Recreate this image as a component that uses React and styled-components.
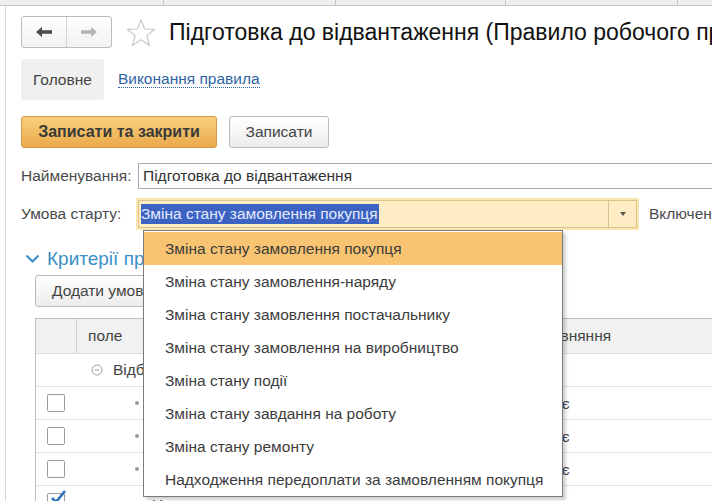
import React from 'react'
import styled, { createGlobalStyle } from 'styled-components'

const GlobalStyle = createGlobalStyle`
  html, body {
    margin: 0;
    padding: 0;
    background: #fff;
    overflow: hidden;
  }
  body {
    font-family: Arial, "Liberation Sans", sans-serif;
    color: #404040;
  }
`

const FS = '15.5px'

const options = [
  'Зміна стану замовлення покупця',
  'Зміна стану замовлення-наряду',
  'Зміна стану замовлення постачальнику',
  'Зміна стану замовлення на виробництво',
  'Зміна стану події',
  'Зміна стану завдання на роботу',
  'Зміна стану ремонту',
  'Надходження передоплати за замовленням покупця',
]

const rows = [
  { name: 'Статус', compare: 'Дорівнює' },
  { name: 'Організація', compare: 'Дорівнює' },
  { name: 'Склад', compare: 'Дорівнює' },
  { name: 'Номер', compare: '', checked: true, deep: true },
]

const BackArrow = ({ color }) => (
  <svg width="18" height="12" viewBox="0 0 18 12">
    <path d="M1 6 L7 1 L7 4.2 L17 4.2 L17 7.8 L7 7.8 L7 11 Z" fill={color} />
  </svg>
)

const ForwardArrow = ({ color }) => (
  <svg width="18" height="12" viewBox="0 0 18 12">
    <path d="M17 6 L11 1 L11 4.2 L1 4.2 L1 7.8 L11 7.8 L11 11 Z" fill={color} />
  </svg>
)

const Star = () => (
  <svg width="30" height="29" viewBox="0 0 30 29">
    <path
      d="M15 1.5 L18.6 11 L28.6 11.3 L20.8 17.6 L23.6 27.4 L15 21.7 L6.4 27.4 L9.2 17.6 L1.4 11.3 L11.4 11 Z"
      fill="none"
      stroke="#c9c9c9"
      strokeWidth="1.2"
      strokeLinejoin="round"
    />
  </svg>
)

const Chevron = () => (
  <svg width="15" height="10" viewBox="0 0 15 10">
    <path d="M1.5 1.5 L7.5 7.5 L13.5 1.5" fill="none" stroke="#3a8fc6" strokeWidth="2" />
  </svg>
)

const CollapseIcon = () => (
  <svg width="12" height="12" viewBox="0 0 12 12">
    <circle cx="6" cy="6" r="5" fill="none" stroke="#a0a0a0" strokeWidth="1" />
    <path d="M3.5 6 H8.5" stroke="#a0a0a0" strokeWidth="1" />
  </svg>
)

const Tick = () => (
  <svg width="20" height="18" viewBox="0 0 20 18">
    <path d="M4 9 L8 13 L17 2" fill="none" stroke="#2f6fbf" strokeWidth="2.6" />
  </svg>
)

const App = () => (
  <>
    <GlobalStyle />
    <Window>
      <TopStrip>
        <StripTab $w={164} />
        <StripTab $w={172} />
        <StripTab $w={170} />
        <StripTab $w={172} />
      </TopStrip>

      <Body>
        <Gutter />
        <Content>
          <HeaderRow>
            <NavGroup>
              <NavButton><BackArrow color="#4a4a4a" /></NavButton>
              <NavButton $divider><ForwardArrow color="#b4b4b4" /></NavButton>
            </NavGroup>
            <StarBox><Star /></StarBox>
            <Title>Підготовка до відвантаження (Правило робочого процесу)</Title>
          </HeaderRow>

          <TabsRow>
            <ActiveTab>Головне</ActiveTab>
            <LinkTab>Виконання правила</LinkTab>
          </TabsRow>

          <CommandBar>
            <PrimaryButton>Записати та закрити</PrimaryButton>
            <Button>Записати</Button>
          </CommandBar>

          <FieldRow $top={15}>
            <Label>Найменування:</Label>
            <TextInput>Підготовка до відвантаження</TextInput>
          </FieldRow>

          <FieldRow $top={11}>
            <Label>Умова старту:</Label>
            <ComboWrap>
              <Combo>
                <ComboText>
                  <Selected>Зміна стану замовлення покупця</Selected>
                </ComboText>
                <ComboButton><Caret /></ComboButton>
              </Combo>
              <DropList>
                {options.map((o, i) => (
                  <DropItem key={o} $active={i === 0}>{o}</DropItem>
                ))}
              </DropList>
            </ComboWrap>
            <SideLabel>Включено</SideLabel>
          </FieldRow>

          <SectionHeader>
            <Chevron />
            <SectionTitle>Критерії пропуску</SectionTitle>
          </SectionHeader>

          <SmallBar>
            <Button $wide>Додати умову</Button>
          </SmallBar>

          <Table>
            <HeadRow>
              <CheckCell $head />
              <FieldCell>поле</FieldCell>
              <CompareCell $head>Вид порівняння</CompareCell>
            </HeadRow>
            <Row>
              <CheckCell />
              <FieldCell $group>
                <CollapseIcon />
                <span>Відбір</span>
              </FieldCell>
              <CompareCell />
            </Row>
            {rows.map(r => (
              <Row key={r.name}>
                <CheckCell>
                  <CheckBox>{r.checked && <TickWrap><Tick /></TickWrap>}</CheckBox>
                </CheckCell>
                <FieldCell $item $deep={r.deep}>
                  {!r.deep && <Dot />}
                  <span>{r.name}</span>
                </FieldCell>
                <CompareCell>{r.compare}</CompareCell>
              </Row>
            ))}
          </Table>
        </Content>
      </Body>
    </Window>
  </>
)

export default App

const Window = styled.div`
  width: 712px;
  height: 501px;
  overflow: hidden;
  background: #fff;
`

const TopStrip = styled.div`
  display: flex;
  height: 5px;
  background: #efefef;
  border-bottom: 1px solid #c4c4c4;
`

const StripTab = styled.div`
  width: ${p => p.$w}px;
  flex-shrink: 0;
  border-right: 1px solid #c8c8c8;
  box-sizing: border-box;
`

const Body = styled.div`
  display: flex;
  height: 495px;
`

const Gutter = styled.div`
  width: 5px;
  flex-shrink: 0;
  border-right: 1px solid #d6d6d6;
`

const Content = styled.div`
  flex: 1;
  min-width: 0;
  padding-left: 15px;
  display: flex;
  flex-direction: column;
`

const HeaderRow = styled.div`
  display: flex;
  align-items: center;
  margin-top: 10px;
  height: 32px;
  white-space: nowrap;
`

const NavGroup = styled.div`
  display: flex;
  width: 91px;
  height: 32px;
  box-sizing: border-box;
  border: 1px solid #bcbcbc;
  border-radius: 3px;
  background: linear-gradient(#ffffff, #f1f1f1);
  flex-shrink: 0;
`

const NavButton = styled.div`
  flex: 1;
  display: flex;
  align-items: center;
  justify-content: center;
  border-left: ${p => (p.$divider ? '1px solid #d4d4d4' : 'none')};
`

const StarBox = styled.div`
  display: flex;
  margin-left: 14px;
  flex-shrink: 0;
`

const Title = styled.div`
  margin-left: 13px;
  font-size: 23px;
  color: #111;
  overflow: hidden;
`

const TabsRow = styled.div`
  display: flex;
  align-items: center;
  margin-top: 11px;
  height: 41px;
`

const ActiveTab = styled.div`
  height: 41px;
  padding: 0 12px;
  display: flex;
  align-items: center;
  background: #f0f0f0;
  border-radius: 2px;
  font-size: ${FS};
  color: #444;
`

const LinkTab = styled.div`
  margin-left: 14px;
  font-size: ${FS};
  color: #2f64a3;
  border-bottom: 1px dotted #2f64a3;
  line-height: 16px;
`

const CommandBar = styled.div`
  display: flex;
  gap: 12px;
  margin-top: 16px;
`

const Button = styled.div`
  height: 32px;
  box-sizing: border-box;
  padding: 0 ${p => (p.$wide ? '16px' : '0')};
  width: ${p => (p.$wide ? '200px' : '100px')};
  display: flex;
  align-items: center;
  justify-content: ${p => (p.$wide ? 'flex-start' : 'center')};
  border: 1px solid #b9b9b9;
  border-radius: 3px;
  background: linear-gradient(#ffffff, #ececec);
  font-size: ${FS};
  color: #444;
  white-space: nowrap;
`

const PrimaryButton = styled.div`
  width: 196px;
  height: 32px;
  box-sizing: border-box;
  display: flex;
  align-items: center;
  justify-content: center;
  border: 1px solid #cf9a45;
  border-radius: 3px;
  background: linear-gradient(#f8cf7d, #eaaa4b);
  font-size: 16px;
  font-weight: bold;
  color: #3a3a3a;
`

const FieldRow = styled.div`
  display: flex;
  align-items: center;
  margin-top: ${p => p.$top}px;
  white-space: nowrap;
`

const Label = styled.div`
  width: 117px;
  flex-shrink: 0;
  font-size: ${FS};
  color: #4a4a4a;
`

const TextInput = styled.div`
  width: 620px;
  flex-shrink: 0;
  height: 26px;
  box-sizing: border-box;
  border: 1px solid #a9a9a9;
  padding-left: 4px;
  display: flex;
  align-items: center;
  font-size: ${FS};
  color: #333;
`

const ComboWrap = styled.div`
  position: relative;
  flex-shrink: 0;
`

const Combo = styled.div`
  display: flex;
  width: 499px;
  height: 28px;
  box-sizing: border-box;
  border: 1px solid #d9c48a;
  box-shadow: 0 0 0 2px #f9e6b0;
  background: #fdecc4;
`

const ComboText = styled.div`
  flex: 1;
  display: flex;
  align-items: center;
  padding-left: 2px;
  font-size: ${FS};
`

const Selected = styled.span`
  background: #3d63c2;
  color: #e4eaff;
  line-height: 20px;
  padding-right: 1px;
`

const ComboButton = styled.div`
  width: 27px;
  display: flex;
  align-items: center;
  justify-content: center;
  border-left: 1px solid #d7c38d;
`

const Caret = styled.div`
  width: 0;
  height: 0;
  border-left: 3px solid transparent;
  border-right: 3px solid transparent;
  border-top: 4px solid #555;
`

const DropList = styled.div`
  position: absolute;
  left: 5px;
  top: 30px;
  z-index: 10;
  width: 420px;
  height: 267px;
  box-sizing: border-box;
  border: 1px solid #7a7a7a;
  background: #fff;
  box-shadow: 3px 3px 3px rgba(0, 0, 0, 0.18);
  padding-top: 1px;
`

const DropItem = styled.div`
  height: 33px;
  padding-left: 21px;
  display: flex;
  align-items: center;
  font-size: ${FS};
  color: #3c3c3c;
  background: ${p => (p.$active ? '#f8c471' : 'transparent')};
`

const SideLabel = styled.div`
  margin-left: 12px;
  font-size: ${FS};
  color: #4a4a4a;
`

const SectionHeader = styled.div`
  display: flex;
  align-items: center;
  gap: 7px;
  margin-top: 20px;
  margin-left: 4px;
  height: 22px;
`

const SectionTitle = styled.div`
  font-size: 19px;
  color: #3a8fc6;
  white-space: nowrap;
`

const SmallBar = styled.div`
  display: flex;
  margin-top: 5px;
  margin-left: 14px;
`

const Table = styled.div`
  margin-top: 11px;
  margin-left: 14px;
  width: 700px;
  border: 1px solid #bfbfbf;
  border-right: none;
`

const HeadRow = styled.div`
  display: flex;
  height: 34px;
  background: #f1f1f1;
  border-bottom: 1px solid #dcdcdc;
`

const Row = styled.div`
  display: flex;
  height: 32px;
  border-bottom: 1px solid #e3e3e3;
`

const CheckCell = styled.div`
  width: 40px;
  flex-shrink: 0;
  display: flex;
  align-items: center;
  justify-content: center;
  border-right: ${p => (p.$head ? '1px solid #d0d0d0' : '1px solid transparent')};
`

const FieldCell = styled.div`
  width: 413px;
  flex-shrink: 0;
  display: flex;
  align-items: center;
  gap: 10px;
  padding-left: ${p => (p.$group ? '14px' : p.$deep ? '75px' : p.$item ? '58px' : '11px')};
  padding-top: ${p => (p.$deep ? '6px' : '0')};
  box-sizing: border-box;
  font-size: ${FS};
  color: #444;
`

const CompareCell = styled.div`
  flex: 1;
  display: flex;
  align-items: center;
  padding-left: ${p => (p.$head ? '9px' : '12px')};
  padding-top: ${p => (p.$head ? '0' : '2px')};
  font-size: ${FS};
  color: #444;
  white-space: nowrap;
`

const CheckBox = styled.div`
  position: relative;
  width: 18px;
  height: 18px;
  box-sizing: border-box;
  border: 1px solid #9c9c9c;
  border-radius: 2px;
  background: #fff;
`

const TickWrap = styled.div`
  position: absolute;
  left: 0;
  top: -5px;
`

const Dot = styled.div`
  width: 4px;
  height: 4px;
  border-radius: 50%;
  background: #9a9a9a;
`
